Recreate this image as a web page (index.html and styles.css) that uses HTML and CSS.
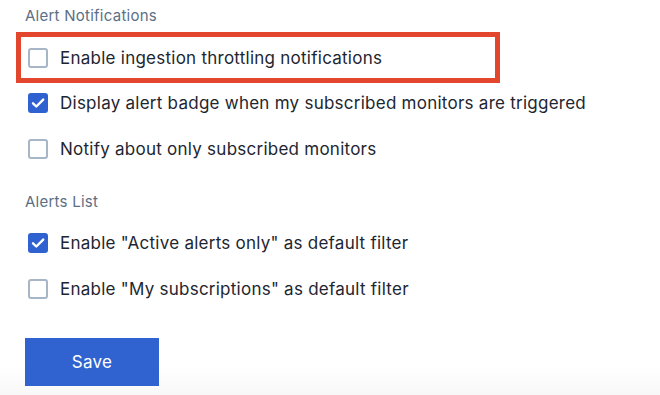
FILE: index.html
```html
<!DOCTYPE html>
<html>
<head>
<meta charset="utf-8">
<link rel="stylesheet" href="styles.css">
</head>
<body>
<div class="page">
  <div class="section-title">Alert Notifications</div>
  <div class="highlight">
    <label class="option">
      <span class="box"></span>
      <span class="label">Enable ingestion throttling notifications</span>
    </label>
  </div>
  <label class="option">
    <span class="box checked"><svg viewBox="0 0 20 20" width="20" height="20"><path d="M5 10.3l3.3 3.2L15.2 6.6" fill="none" stroke="#fff" stroke-width="2.4" stroke-linecap="round" stroke-linejoin="round"/></svg></span>
    <span class="label">Display alert badge when my subscribed monitors are triggered</span>
  </label>
  <label class="option">
    <span class="box"></span>
    <span class="label">Notify about only subscribed monitors</span>
  </label>

  <div class="section-title second">Alerts List</div>
  <label class="option">
    <span class="box checked"><svg viewBox="0 0 20 20" width="20" height="20"><path d="M5 10.3l3.3 3.2L15.2 6.6" fill="none" stroke="#fff" stroke-width="2.4" stroke-linecap="round" stroke-linejoin="round"/></svg></span>
    <span class="label">Enable "Active alerts only" as default filter</span>
  </label>
  <label class="option">
    <span class="box"></span>
    <span class="label">Enable "My subscriptions" as default filter</span>
  </label>

  <button class="save">Save</button>
</div>
</body>
</html>
```

FILE: styles.css
```css
html, body {
  margin: 0;
  padding: 0;
}
body {
  width: 660px;
  height: 395px;
  overflow: hidden;
  font-family: Inter, "Liberation Sans", Arial, sans-serif;
  background: linear-gradient(to bottom, #ffffff 0, #ffffff 365px, #f8f8f8 395px);
}
.page {
  padding-left: 16px;
  display: flex;
  flex-direction: column;
  align-items: flex-start;
}
.section-title {
  height: 32px;
  line-height: 32px;
  padding-left: 9px;
  font-size: 15px;
  letter-spacing: 0.25px;
  color: #5c6f85;
}
.section-title.second {
  margin-top: 15px;
  height: 30px;
  line-height: 30px;
  margin-bottom: 3px;
}
.highlight {
  box-sizing: border-box;
  width: 484px;
  height: 51px;
  border: 5px solid #e2472e;
  margin-bottom: -3px;
  display: flex;
  align-items: center;
}
.highlight .option {
  height: 41px;
  padding-left: 7px;
}
.option {
  display: flex;
  align-items: center;
  height: 46px;
  padding-left: 12px;
  gap: 12px;
}
.box {
  box-sizing: border-box;
  width: 20px;
  height: 20px;
  border: 2px solid #a6b6c7;
  border-radius: 3px;
  background: #fff;
  display: flex;
  align-items: center;
  justify-content: center;
  flex: none;
}
.box.checked {
  border: none;
  background: #2f61d0;
}
.box svg {
  display: block;
}
.label {
  font-size: 17px;
  letter-spacing: 0.25px;
  color: #1d2631;
}
.save {
  margin-top: 26px;
  margin-left: 9px;
  width: 134px;
  height: 48px;
  border: none;
  border-radius: 0;
  background: #3163d0;
  color: #fff;
  font-family: Inter, "Liberation Sans", Arial, sans-serif;
  font-size: 17px;
  letter-spacing: 0.25px;
  padding: 0;
}
```
